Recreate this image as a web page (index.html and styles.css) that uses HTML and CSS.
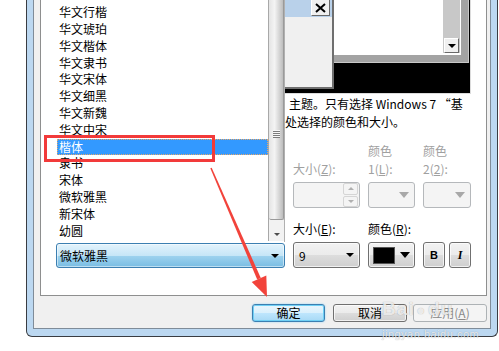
FILE: index.html
```html
<!DOCTYPE html>
<html lang="zh">
<head>
    <meta charset="UTF-8">
    <title>窗口颜色和外观</title>
    <link rel="stylesheet" href="styles.css">
</head>
<body>
    <div class="frame">
        <div class="dialog">
            <div class="panel">
                <div class="preview">
                    <div class="pv-win">
                        <div class="pv-client">
                            <div class="pv-scroll"><span class="pv-down"><i></i></span></div>
                        </div>
                    </div>
                    <div class="msgbox">
                        <div class="msgbox-title">
                            <span class="msgbox-close">
                                <svg width="11" height="10" viewBox="0 0 11 10"><path d="M1 1 L10 9 M10 1 L1 9" stroke="#000" stroke-width="2"/></svg>
                            </span>
                        </div>
                    </div>
                </div>
                <p class="desc"><span class="cont">主题。只有选择 Windows 7 “基</span><br>处选择的颜色和大小。</p>
                <div class="controls">
                    <div class="lbl"></div>
                    <div class="lbl dis">大小(<u>Z</u>):</div>
                    <div class="lbl dis">颜色<br>1(<u>L</u>):</div>
                    <div class="lbl dis">颜色<br>2(<u>2</u>):</div>

                    <div class="combo"><span class="arrow"></span></div>
                    <div class="spin dis">
                        <div class="spin-btns">
                            <span class="spin-up"></span>
                            <span class="spin-down"></span>
                        </div>
                    </div>
                    <div class="combo dis"><span class="arrow big"></span></div>
                    <div class="combo dis"><span class="arrow big"></span></div>

                    <div class="lbl row3"></div>
                    <div class="lbl row3">大小(<u>E</u>):</div>
                    <div class="lbl row3">颜色(<u>R</u>):</div>
                    <div class="lbl row3"></div>

                    <div class="font-field">
                        <div class="droplist">
                            <ul class="options">
                                <li>华文行楷</li>
                                <li>华文琥珀</li>
                                <li>华文楷体</li>
                                <li>华文隶书</li>
                                <li>华文宋体</li>
                                <li>华文细黑</li>
                                <li>华文新魏</li>
                                <li>华文中宋</li>
                                <li class="selected">楷体</li>
                                <li>隶书</li>
                                <li>宋体</li>
                                <li>微软雅黑</li>
                                <li>新宋体</li>
                                <li>幼圆</li>
                            </ul>
                            <div class="vscroll">
                                <div class="thumb"><span class="grip"></span></div>
                                <div class="track"></div>
                                <div class="vdown"><i></i></div>
                            </div>
                        </div>
                        <span>微软雅黑</span><span class="arrow"></span>
                    </div>
                    <div class="combo"><span>9</span><span class="arrow"></span></div>
                    <div class="combo color"><span class="swatch"></span><span class="arrow big"></span></div>
                    <div class="style-btns">
                        <button class="sbtn bold">B</button>
                        <button class="sbtn italic">I</button>
                    </div>
                </div>
            </div>
            <div class="buttons">
                <button class="btn default">确定</button>
                <button class="btn">取消</button>
                <button class="btn disabled">应用(<u>A</u>)</button>
            </div>
        </div>
    </div>

    <div class="mark-box"></div>
    <svg class="mark-arrow" width="499" height="351" viewBox="0 0 499 351">
        <polygon points="211.7,167.7 210.3,168.3 257.2,279.5 260.8,277.9" fill="#f2433b"/>
        <polygon points="267,297 251.7,281.9 266.3,275.5" fill="#f2433b"/>
    </svg>
    <div class="watermark">
        <div class="wm-logo">Bai<span class="wm-paw">&#x25CF;</span>du</div>
        <div class="wm-url">jingyan.baidu.com</div>
    </div>
</body>
</html>
```
FILE: styles.css
```css
* {
    box-sizing: border-box;
}
body {
    margin: 0;
    width: 499px;
    height: 351px;
    overflow: hidden;
    position: relative;
    background: #fff;
    font-family: "Noto Sans CJK SC", "Noto Sans", sans-serif;
    font-size: 12px;
    color: #000;
}
.frame {
    margin-left: 26px;
    width: 472px;
    height: 337px;
    border: 1px solid #3a3d42;
    border-top: none;
    border-radius: 0 0 6px 6px;
    background: #bcd8f1;
    padding: 0 6px 7px 6px;
}
.dialog {
    height: 329px;
    border: 1px solid #7f8c99;
    border-top: none;
    background: #f0f0f0;
    padding: 0 3px 0 6px;
}
.panel {
    position: relative;
    height: 296px;
    border: 1px solid #8e8f8f;
    border-top: none;
    background: #fff;
}

/* preview picture */
.preview {
    position: relative;
    margin-left: 15px;
    width: 415px;
    height: 94px;
    background: #000;
    border-right: 1px solid #dcdcdc;
    border-bottom: 1px solid #dcdcdc;
}
.pv-win {
    position: absolute;
    left: 0;
    top: 0;
    width: 413px;
    height: 63px;
    background: #a3a3a3;
    border-right: 1px solid #c8c8c8;
    border-bottom: 1px solid #c8c8c8;
}
.pv-client {
    position: absolute;
    left: 0;
    top: 0;
    width: 405px;
    height: 55px;
    background: #fff;
}
.pv-scroll {
    position: absolute;
    right: 1px;
    top: 0;
    width: 17px;
    height: 53px;
    background: #c8c8c8;
}
.pv-down {
    position: absolute;
    left: 1px;
    bottom: 0;
    width: 15px;
    height: 15px;
    background: #f0f0f0;
    border-top: 1px solid #fff;
    border-left: 1px solid #fff;
    border-right: 1px solid #696969;
    border-bottom: 1px solid #696969;
    display: flex;
    align-items: center;
    justify-content: center;
}
.pv-down i {
    border-left: 4px solid transparent;
    border-right: 4px solid transparent;
    border-top: 4px solid #000;
}
.msgbox {
    position: absolute;
    left: 144px;
    top: 0;
    width: 134px;
    height: 89px;
    background: #f0f0f0;
    border-right: 2px solid #6f6f6f;
    border-bottom: 2px solid #6f6f6f;
}
.msgbox-title {
    position: relative;
    height: 17px;
    background: #b9d1ea;
}
.msgbox-close {
    position: absolute;
    right: 2px;
    top: 0;
    width: 19px;
    height: 16px;
    background: #f0f0f0;
    border-left: 1px solid #fff;
    border-right: 1px solid #696969;
    border-bottom: 1px solid #696969;
    display: flex;
    align-items: center;
    justify-content: center;
}

.desc {
    margin: 1px 0 0 0;
    padding-left: 244px;
    line-height: 18px;
    white-space: nowrap;
}
.cont {
    padding-left: 4px;
}

/* controls grid */
.controls {
    display: grid;
    grid-template-columns: 229px 67px 47px 48px;
    grid-template-rows: 36px 26px 26px 26px;
    column-gap: 8px;
    row-gap: 4px;
    margin: 11px 0 0 15px;
}
.lbl {
    line-height: 18px;
    align-self: end;
    white-space: nowrap;
}
.lbl.dis {
    color: #a0a0a0;
}
.combo,
.spin {
    position: relative;
    height: 26px;
    border: 1px solid #707070;
    border-radius: 3px;
    background: linear-gradient(#f2f2f2, #ebebeb 50%, #dddddd 50%, #cfcfcf);
    box-shadow: inset 0 0 0 1px rgba(255, 255, 255, 0.7);
    display: flex;
    align-items: center;
    padding: 0 5px;
}
.combo.dis,
.spin.dis {
    border-color: #b5b8bb;
    background: #f4f4f4;
    box-shadow: none;
}
.arrow {
    margin-left: auto;
    border-left: 4px solid transparent;
    border-right: 4px solid transparent;
    border-top: 4px solid #000;
}
.arrow.big {
    border-left-width: 5px;
    border-right-width: 5px;
    border-top-width: 6px;
}
.dis .arrow {
    border-top-color: #a8a8a8;
}
.spin {
    background: #fff;
    padding: 0;
}
.spin-btns {
    margin-left: auto;
    margin-right: 1px;
    width: 15px;
    height: 24px;
    display: flex;
    flex-direction: column;
    gap: 1px;
}
.spin-up,
.spin-down {
    flex: 1;
    border: 1px solid #d5d5d5;
    border-radius: 2px;
    background: #f4f4f4;
    display: flex;
    align-items: center;
    justify-content: center;
}
.spin-up::after {
    content: "";
    border-left: 3px solid transparent;
    border-right: 3px solid transparent;
    border-bottom: 3px solid #b0b0b0;
}
.spin-down::after {
    content: "";
    border-left: 3px solid transparent;
    border-right: 3px solid transparent;
    border-top: 3px solid #b0b0b0;
}
.color {
    padding: 0 4px 0 4px;
}
.swatch {
    width: 22px;
    height: 17px;
    background: #000;
    border: 1px solid #555;
}
.style-btns {
    display: flex;
    gap: 4px;
}
.sbtn {
    width: 22px;
    height: 26px;
    padding: 0;
    border: 1px solid #707070;
    border-radius: 3px;
    background: linear-gradient(#f2f2f2, #ebebeb 50%, #dddddd 50%, #cfcfcf);
    box-shadow: inset 0 0 0 1px rgba(255, 255, 255, 0.7);
    color: #000;
    font-size: 11px;
}
.sbtn.bold {
    font-family: "Liberation Sans", sans-serif;
    font-weight: bold;
}
.sbtn.italic {
    font-family: "Liberation Serif", serif;
    font-style: italic;
    font-weight: bold;
    font-size: 12px;
}

/* font combo with its open list */
.font-field {
    position: relative;
    height: 25px;
    margin-top: 1px;
    border: 1px solid #3c7fb1;
    border-radius: 3px;
    background: linear-gradient(#e3f3fc, #c6e6f7 50%, #9fd3ef 50%, #79bde3);
    box-shadow: inset 0 0 0 1px rgba(255, 255, 255, 0.5);
    display: flex;
    align-items: center;
    padding: 0 5px 0 3px;
}
.droplist {
    position: absolute;
    left: -1px;
    bottom: calc(100% + 2px);
    width: 229px;
    height: 242px;
    background: #fff;
    border-right: 1px solid #b0b0b0;
    border-left: 1px solid #fff;
    z-index: 2;
}
.options {
    list-style: none;
    margin: 0;
    padding: 4.3px 0 0 0;
    width: 211px;
}
.options li {
    height: 16.8px;
    line-height: 16.8px;
    padding-left: 2px;
    white-space: nowrap;
}
.options li.selected {
    background: #3399ff;
    color: #fff;
    outline: 1px dotted #e8a868;
    outline-offset: -1px;
}
.vscroll {
    position: absolute;
    right: 0;
    top: 0;
    width: 16px;
    height: 241px;
    border-left: 1px solid #a8a8a8;
    display: flex;
    flex-direction: column;
}
.thumb {
    height: 220px;
    border-right: 1px solid #9a9a9a;
    border-bottom: 1px solid #9a9a9a;
    border-radius: 0 0 2px 2px;
    background: linear-gradient(90deg, #e4e4e4, #f4f4f4 40%, #d8d8d8 70%, #bdbdbd);
    display: flex;
    align-items: center;
    justify-content: center;
    padding-top: 48px;
}
.grip {
    width: 7px;
    height: 8px;
    background: repeating-linear-gradient(#f8f8f8 0, #f8f8f8 1px, #7d7d7d 1px, #7d7d7d 2px);
}
.track {
    height: 7px;
    background: #f2f2f2;
}
.vdown {
    flex: 1;
    display: flex;
    align-items: center;
    justify-content: center;
    background: #f2f2f2;
}
.vdown i {
    border-left: 3px solid transparent;
    border-right: 3px solid transparent;
    border-top: 3px solid #4d4d4d;
}

/* bottom buttons */
.buttons {
    display: flex;
    justify-content: flex-end;
    gap: 6px;
    padding: 8px 0 0 0;
}
.btn {
    height: 18px;
    width: 74px;
    padding: 0;
    border: 1px solid #707070;
    border-radius: 3px;
    background: linear-gradient(#f2f2f2, #ebebeb 50%, #dddddd 50%, #cfcfcf);
    box-shadow: inset 0 0 0 1px rgba(255, 255, 255, 0.7);
    font-family: "Noto Sans CJK SC", sans-serif;
    font-size: 12px;
    line-height: 16px;
    color: #000;
}
.btn.default {
    width: 73px;
    margin-right: 2px;
    border-color: #3c7fb1;
    background: linear-gradient(#eaf6fd, #d9f0fc 50%, #bee6fd 50%, #a7d9f5);
    box-shadow: 0 0 2px #8fd3f7, inset 0 0 0 1px #6fd0f5;
}
.btn.disabled {
    color: #8a8a8a;
    border-color: #adb2b5;
    background: #f4f4f4;
    box-shadow: none;
}

/* annotation */
.mark-box {
    position: absolute;
    z-index: 5;
    left: 44px;
    top: 135px;
    width: 171px;
    height: 27px;
    border: 3px solid #f23a3a;
}
.mark-arrow {
    position: absolute;
    z-index: 5;
    left: 0;
    top: 0;
}
.watermark {
    position: absolute;
    z-index: 5;
    left: 382px;
    top: 298px;
    color: rgba(255, 255, 255, 0.8);
    text-shadow: 0 0 1px rgba(0, 0, 0, 0.35);
    font-family: "Liberation Sans", sans-serif;
}
.wm-logo {
    font-size: 19px;
    font-weight: bold;
    line-height: 22px;
    letter-spacing: 1px;
}
.wm-paw {
    font-size: 14px;
    margin: 0 2px;
}
.wm-url {
    font-size: 11px;
    line-height: 14px;
    margin-top: 6px;
    letter-spacing: 0.5px;
}
```
